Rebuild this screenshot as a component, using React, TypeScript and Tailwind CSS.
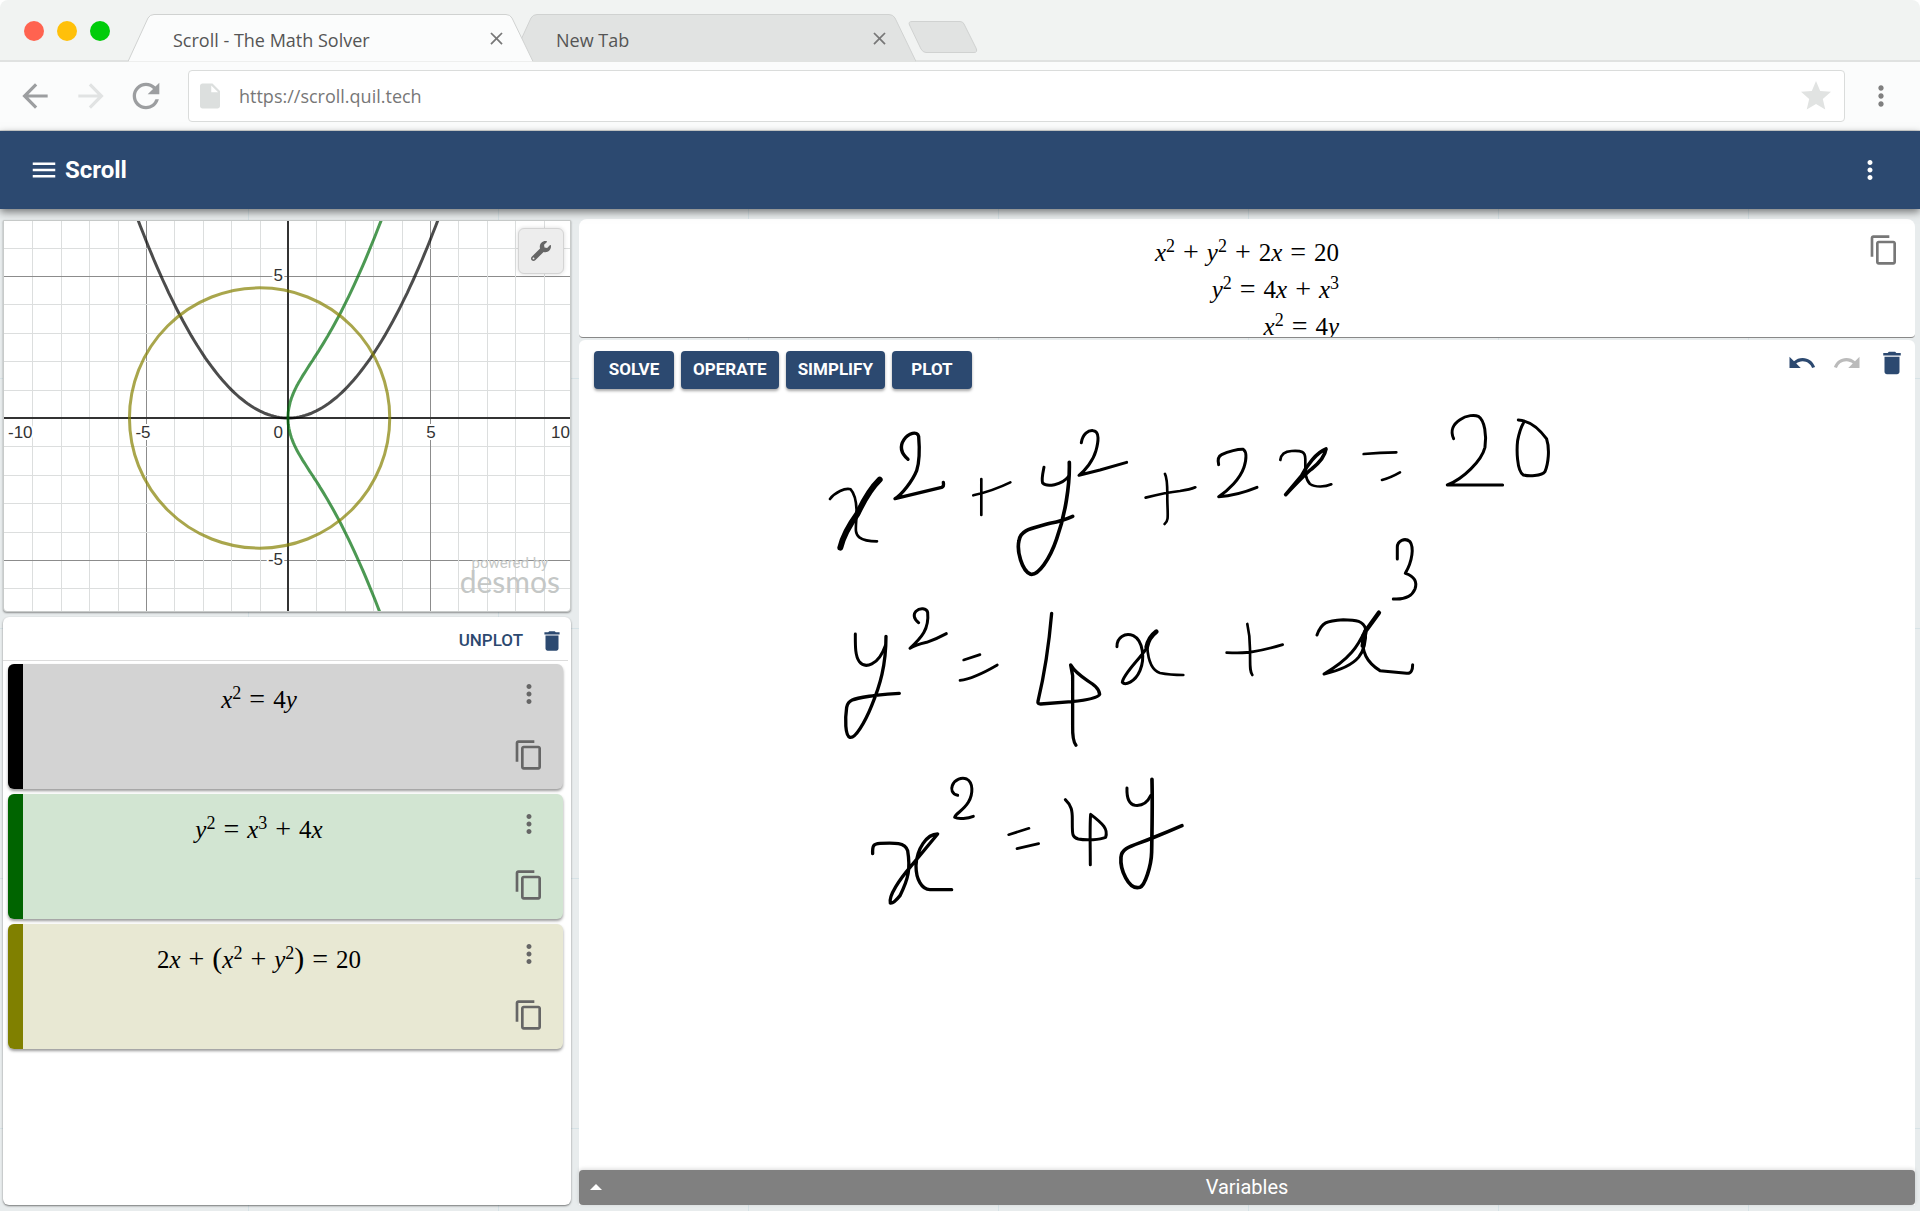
import {useState} from "react";
import type {ReactNode} from "react";
import {
  MdArrowBack,
  MdArrowForward,
  MdClose,
  MdContentCopy,
  MdDelete,
  MdInsertDriveFile,
  MdMenu,
  MdMoreVert,
  MdRedo,
  MdRefresh,
  MdStar,
  MdUndo,
} from "react-icons/md";
import {FaWrench} from "react-icons/fa";

const equations = ["x^2 + y^2 + 2x = 20", "y^2 = 4x + x^3", "x^2 = 4y"];

const plots = [
  {tex: "x^2 = 4y", bar: "bg-black", card: "bg-[#d3d3d3]"},
  {tex: "y^2 = x^3 + 4x", bar: "bg-[#006400]", card: "bg-[#d2e5d2]"},
  {tex: "2x + (x^2 + y^2) = 20", bar: "bg-[#808000]", card: "bg-[#e8e8d3]"},
];

// pen strokes, one group for each part of the canvas that was written on
const ink = [
  {
    x: 221,
    y: 10,
    strokes: [
      {w: 8, d: "M90 300C105 280 135 266 152 271C165 285 170 310 170 345C167 390 164 405 178 415C190 424 215 427 231 427"},
      {w: 18, d: "M239 242Q205 275 172 345Q132 400 121 446"},
      {w: 10, d: "M324 181C300 160 300 140 312 122C325 102 352 95 356 112C360 160 358 190 350 215C338 245 305 288 285 299L425 265Q433 262 430 250"},
      {w: 8, d: "M520 289Q580 275 631 250M544 240V348"},
      {w: 9, d: "M732 205C728 225 724 240 728 252C740 265 785 259 806 232"},
      {w: 11, d: "M808 190C810 260 795 350 770 420C750 480 715 530 692 526C665 515 650 455 657 425C662 390 700 388 750 373Q790 365 818 352"},
      {w: 9, d: "M844 131C848 105 865 93 880 95C900 97 895 130 888 155C880 185 855 215 837 229L900 213L980 190"},
      {w: 8, d: "M1037 296Q1100 280 1140 276Q1170 272 1186 265M1095 225Q1103 240 1102 300C1103 350 1107 365 1094 375"},
      {w: 9, d: "M166 705C166 740 165 770 178 788C195 810 235 800 256 740"},
      {w: 10, d: "M258 712C258 800 240 860 215 920C195 970 165 1020 150 1015C135 1010 135 960 140 925C145 900 160 900 225 889Q265 884 298 883"},
      {w: 9, d: "M356 671C340 660 340 645 348 637C360 625 380 628 383 640C388 690 365 715 330 748Q345 738 380 730Q410 720 439 704"},
      {w: 8, d: "M491 783L540 767M480 844Q520 840 592 798"},
      {w: 10, d: "M755 643C745 760 730 840 714 907Q712 915 722 915L815 908C870 902 895 895 899 886C895 850 840 845 812 798L818 830V980Q817 1025 828 1039"},
      {w: 9, d: "M951 743C950 715 975 700 1000 710C1030 725 1035 780 1020 815C1005 850 975 860 967 850C970 825 1015 785 1042 745"},
      {w: 14, d: "M1069 698Q1046 715 1040 745"},
      {w: 8, d: "M1042 745C1045 790 1060 815 1080 822Q1110 828 1150 828"},
    ],
  },
  {
    x: 541,
    y: 0,
    strokes: [
      {w: 9, d: "M296 227C292 210 295 202 305 197C325 187 355 180 370 181C382 190 378 215 372 235C360 270 325 305 296 323Q350 320 411 295"},
      {w: 8, d: "M481 213C483 195 495 187 515 186C545 184 556 188 556 210C556 250 555 270 570 285C585 295 615 295 634 286"},
      {w: 11, d: "M618 180C590 190 560 230 545 260L497 317Q560 250 575 240C600 220 615 200 618 180"},
      {w: 8, d: "M731 195Q780 190 829 190M786 273Q810 267 840 250"},
      {w: 9, d: "M1001 149C990 125 1000 105 1020 92C1040 78 1065 77 1075 82C1095 95 1100 140 1095 175C1085 215 1030 270 982 288H1148"},
      {w: 9, d: "M1195 93C1230 95 1255 115 1280 150C1290 180 1285 225 1275 248C1265 262 1225 262 1210 258C1190 245 1190 180 1193 155Q1200 120 1210 103"},
      {w: 9, d: "M832 510V475C832 455 855 445 870 458C882 475 878 515 856 553C885 562 892 580 885 600C875 625 850 632 820 630"},
      {w: 8, d: "M320 791Q380 793 400 788Q440 782 488 767M382 705Q390 740 390 780C391 830 388 845 397 858"},
      {w: 9, d: "M591 738C605 700 620 695 670 692C710 692 730 697 737 720C740 790 720 830 612 855C690 810 715 770 735 725"},
      {w: 13, d: "M777 671L737 726L728 770"},
      {w: 9, d: "M728 740C725 790 740 820 780 845L860 853C875 855 878 840 878 827"},
    ],
  },
  {
    x: 241,
    y: 330,
    strokes: [
      {w: 10, d: "M158 404C157 380 160 374 180 373C225 371 255 370 263 395C272 450 265 480 240 530Q220 555 211 552C205 530 240 480 270 445L353 345C320 345 290 390 288 440C288 480 305 512 330 512H395"},
      {w: 9, d: "M413 229C395 225 393 210 397 200C405 180 425 175 440 180C460 190 460 225 445 250C430 275 405 285 404 295C415 302 445 298 460 292"},
      {w: 8, d: "M566 347L627 328M591 389L656 374"},
      {w: 9, d: "M736 242C755 260 757 275 757 300C757 345 755 355 775 360C800 365 840 362 857 355C865 330 850 315 812 286C809 320 811 380 811 437"},
      {w: 9, d: "M921 207C920 235 925 255 945 259C970 262 985 245 992 230"},
      {w: 11, d: "M996 181C998 260 996 340 995 400C994 440 975 500 960 505C925 515 900 450 903 415C905 385 935 382 995 358Q1040 340 1086 320"},
    ],
  },
];

const Formula = ({tex}: {tex: string}) => {
  const tokens = tex.match(/\^\d|\d+|[a-z]|[+=()]/g) ?? [];
  return (
    <span className="whitespace-nowrap font-['Liberation_Serif',serif] text-[25px] leading-[37px] text-black">
      {tokens.map((t, i) => {
        if (t[0] === "^")
          return (
            <sup key={i} className="top-[-9px] text-[18px] leading-none">
              {t[1]}
            </sup>
          );
        if (/[a-z]/.test(t)) return <i key={i}>{t}</i>;
        if (/[+=]/.test(t))
          return (
            <span key={i} className="mx-2 text-[28px] leading-none">
              {t}
            </span>
          );
        if (/[()]/.test(t))
          return (
            <span key={i} className="text-[30px] leading-none">
              {t}
            </span>
          );
        return <span key={i}>{t}</span>;
      })}
    </span>
  );
};

const Tab = ({title, active}: {title: string; active?: boolean}) => (
  <div
    className={`relative flex h-12 w-[405px] items-center pl-[45px] pr-[25px] ${
      active ? "z-10" : "-ml-[22px]"
    }`}
  >
    <svg
      className="absolute inset-0 h-full w-full"
      viewBox="0 0 405 48"
      preserveAspectRatio="none"
      fill={active ? "#fbfcfc" : "#e1e3e2"}
      stroke="#d0d2d1"
    >
      <path d="M0 47.5L20 4Q22 .5 26 .5H378Q382 .5 384 4L405 47.5" />
    </svg>
    <button
      type="button"
      className="relative flex-1 pt-1 text-left text-lg text-[#555]"
    >
      {title}
    </button>
    <button
      type="button"
      aria-label={`Close ${title}`}
      className="relative flex size-6 items-center justify-center text-[#777]"
    >
      <MdClose size={21} />
    </button>
  </div>
);

const BrowserBar = () => {
  const [url, setUrl] = useState("https://scroll.quil.tech");

  return (
    <div className="rounded-t-lg bg-[#f1f3f2] font-['Open_Sans',sans-serif]">
      <div className="flex h-[62px] items-start border-b-2 border-[#e0e2e1] pt-[14px]">
        <div className="flex w-32 gap-[13px] pl-6 pt-[7px]">
          <span className="size-5 rounded-full bg-[#ff6350]" />
          <span className="size-5 rounded-full bg-[#ffc00a]" />
          <span className="size-5 rounded-full bg-[#00cc0a]" />
        </div>
        <Tab title="Scroll - The Math Solver" active />
        <Tab title="New Tab" />
        <button
          type="button"
          aria-label="Open a new tab"
          className="-ml-2 pt-[7px]"
        >
          <svg width="70" height="32" fill="#e1e3e2" stroke="#d0d2d1">
            <path d="M4 .5H52Q55 .5 56 3L68 27Q70 31.500 66 31.500H18Q15 31.500 13 28L1.500 4Q0 .5 4 .5Z" />
          </svg>
        </button>
      </div>
      <div className="flex h-[69px] items-center border-b border-[#d5d7d6] bg-[#fbfcfc] pb-1 pl-4 pr-[23px] pt-1">
        <button type="button" aria-label="Back" className="text-[#9c9ea0]">
          <MdArrowBack size={38} />
        </button>
        <button
          type="button"
          aria-label="Forward"
          className="ml-[18px] text-[#e1e3e3]"
        >
          <MdArrowForward size={38} />
        </button>
        <button
          type="button"
          aria-label="Reload"
          className="ml-4 text-[#9c9ea0]"
        >
          <MdRefresh size={40} />
        </button>
        <div className="ml-[22px] mr-5 flex h-[52px] flex-1 items-center rounded border border-[#dadcdb] bg-white pl-[6px] pr-[10px]">
          <MdInsertDriveFile size={30} className="text-[#dcdfde]" />
          <input
            type="text"
            aria-label="Address"
            value={url}
            onChange={(e) => setUrl(e.target.value)}
            className="ml-[14px] flex-1 bg-transparent text-lg text-[#777] outline-none"
          />
          <button
            type="button"
            aria-label="Bookmark this page"
            className="text-[#e1e3e2]"
          >
            <MdStar size={36} />
          </button>
        </div>
        <button
          type="button"
          aria-label="Browser menu"
          className="flex w-8 justify-center text-[#808080]"
        >
          <MdMoreVert size={38} />
        </button>
      </div>
    </div>
  );
};

const UNIT = 28.4;
const px = (x: number) => 284 + x * UNIT;
const py = (y: number) => 197 - y * UNIT;

const toPath = (points: number[][]) =>
  "M" + points.map(([x, y]) => `${px(x).toFixed(1)} ${py(y).toFixed(1)}`).join("L");

const parabola = Array.from({length: 113}, (_, i) => {
  const x = -5.6 + i * 0.1;
  return [x, (x * x) / 4];
});

// y^2 = x^3 + 4x, walked from the lower branch up to the upper one
const cubic = Array.from({length: 121}, (_, i) => {
  const t = (i - 60) / 60;
  const x = 3.5 * t * t;
  return [x, Math.sign(t) * Math.sqrt(x * x * x + 4 * x)];
});

const axisLabels = [
  {text: "-10", x: 4, y: 217, anchor: "start"},
  {text: "-5", x: 139, y: 217, anchor: "middle"},
  {text: "0", x: 279, y: 217, anchor: "end"},
  {text: "5", x: 427, y: 217, anchor: "middle"},
  {text: "10", x: 566, y: 217, anchor: "end"},
  {text: "5", x: 279, y: 60, anchor: "end"},
  {text: "-5", x: 279, y: 344, anchor: "end"},
] as const;

const Graph = () => (
  <div className="relative mt-px overflow-hidden rounded-b border border-[#c8cbca] bg-white shadow-[0_1px_2px_rgba(0,0,0,0.4)]">
    <svg viewBox="0 0 566 390" className="block w-full" fill="none">
      {Array.from({length: 19}, (_, i) => i - 9).map((n) => (
        <g
          key={n}
          stroke={n % 5 ? "#dcdede" : "#8c8c8c"}
          shapeRendering="crispEdges"
        >
          <path d={`M${Math.round(px(n))} 0V390`} />
          <path d={`M0 ${Math.round(py(n))}H566`} />
        </g>
      ))}
      <path d="M284 0V390M0 197H566" stroke="#333" strokeWidth="2" />
      <g strokeWidth="3" strokeOpacity="0.7">
        <path d={toPath(parabola)} stroke="#000" />
        <path d={toPath(cubic)} stroke="#006e0a" />
        <circle
          cx={px(-1)}
          cy={py(0)}
          r={Math.sqrt(21) * UNIT}
          stroke="#858000"
        />
      </g>
      <g
        className="font-['Liberation_Sans',Arial,sans-serif] text-[17px]"
        fill="#333"
        stroke="#fff"
        strokeWidth="4"
        paintOrder="stroke"
      >
        {axisLabels.map((l, i) => (
          <text key={i} x={l.x} y={l.y} textAnchor={l.anchor}>
            {l.text}
          </text>
        ))}
      </g>
    </svg>
    <button
      type="button"
      aria-label="Graph settings"
      className="absolute right-[6px] top-[7px] flex size-[46px] items-center justify-center rounded-md border border-[#d4d4d4] bg-[#ededed] text-[#666] shadow-[0_0_4px_rgba(0,0,0,0.15)]"
    >
      <FaWrench size={20} />
    </button>
    <a
      href="https://www.desmos.com"
      className="absolute bottom-[19px] right-[10px] flex flex-col items-center text-[#c4c7c6]"
    >
      <span className="font-['Roboto',sans-serif] text-[15px] leading-[14px]">
        powered by
      </span>
      <span className="font-['Lato',sans-serif] text-[30px] leading-[22px]">
        desmos
      </span>
    </a>
  </div>
);

const PlotList = () => (
  <section className="flex flex-1 flex-col rounded-md bg-white shadow-[0_1px_2px_rgba(0,0,0,0.5)]">
    <div className="mr-[3px] flex h-11 items-center justify-end border-b border-[#dcdcdc] pr-[3px] pt-1">
      <button
        type="button"
        className="px-4 text-[17px] font-medium text-[#2c4970]"
      >
        UNPLOT
      </button>
      <button
        type="button"
        aria-label="Delete all plots"
        className="text-[#2c4970]"
      >
        <MdDelete size={26} />
      </button>
    </div>
    <ul className="flex flex-col gap-[5px] pl-[5px] pr-2 pt-[3px]">
      {plots.map((plot) => (
        <li
          key={plot.tex}
          className={`flex h-[125px] overflow-hidden rounded-md shadow-[0_2px_3px_rgba(0,0,0,0.4)] ${plot.card}`}
        >
          <div className={`w-[15px] ${plot.bar}`} />
          <div className="flex-1 pt-[17px] text-center">
            <Formula tex={plot.tex} />
          </div>
          <div className="flex w-[68px] flex-col items-center pt-[15px] text-[#666]">
            <button type="button" aria-label={`Options for ${plot.tex}`}>
              <MdMoreVert size={30} />
            </button>
            <button
              type="button"
              aria-label={`Copy ${plot.tex}`}
              className="mt-[30px]"
            >
              <MdContentCopy size={32} />
            </button>
          </div>
        </li>
      ))}
    </ul>
  </section>
);

const ToolButton = ({children}: {children: ReactNode}) => (
  <button
    type="button"
    className="h-[38px] min-w-20 rounded bg-[#2c4970] px-3 text-[17px] font-bold text-white shadow-[0_2px_3px_rgba(0,0,0,0.35)]"
  >
    {children}
  </button>
);

const Canvas = () => (
  <section className="flex flex-1 flex-col rounded-t-md bg-white">
    <div className="flex items-start justify-between pl-[15px] pr-2">
      <div className="flex gap-[7px] pt-[11px]">
        <ToolButton>SOLVE</ToolButton>
        <ToolButton>OPERATE</ToolButton>
        <ToolButton>SIMPLIFY</ToolButton>
        <ToolButton>PLOT</ToolButton>
      </div>
      <div className="flex gap-[15px] pt-2 text-[#2c4970]">
        <button type="button" aria-label="Undo">
          <MdUndo size={30} />
        </button>
        <button type="button" aria-label="Redo" className="text-[#bbb]">
          <MdRedo size={30} />
        </button>
        <button type="button" aria-label="Clear canvas">
          <MdDelete size={30} />
        </button>
      </div>
    </div>
    <svg
      className="min-h-[560px] w-full flex-1"
      fill="none"
      stroke="#000"
      strokeLinecap="round"
      strokeLinejoin="round"
    >
      {ink.map((group, i) => (
        <g key={i} transform={`translate(${group.x} ${group.y}) scale(0.3333)`}>
          {group.strokes.map((s, j) => (
            <path key={j} d={s.d} strokeWidth={s.w} />
          ))}
        </g>
      ))}
    </svg>
    <button
      type="button"
      className="flex h-[35px] items-center rounded bg-[#808080] px-[11px] pb-[2px] text-xl text-white shadow-[0_-1px_4px_rgba(0,0,0,0.15)]"
    >
      <svg width="12" height="6" fill="#fff">
        <path d="M6 0L12 6H0Z" />
      </svg>
      <span className="flex-1 pr-3 text-center">Variables</span>
    </button>
  </section>
);

const App = () => {
  return (
    <div className="flex min-h-screen flex-col bg-white font-['Roboto',sans-serif]">
      <BrowserBar />
      <header className="relative z-10 flex h-[78px] items-center justify-between bg-[#2c4970] pl-[29px] pr-[35px] text-white shadow-[0_3px_8px_rgba(0,0,0,0.5)]">
        <div className="flex items-center gap-[6px]">
          <button type="button" aria-label="Menu">
            <MdMenu size={30} />
          </button>
          <h1 className="text-2xl font-bold">Scroll</h1>
        </div>
        <button type="button" aria-label="More options">
          <MdMoreVert size={30} />
        </button>
      </header>
      <main className="grid flex-1 grid-cols-[71fr_167fr] gap-2 bg-[#e8eced] bg-[linear-gradient(to_right,#d6e2e6_1px,transparent_1px),linear-gradient(to_bottom,#d6e2e6_1px,transparent_1px)] bg-[size:250px_250px] bg-[position:248px_169px] pb-[6px] pl-[3px] pr-[5px] pt-[10px]">
        <div className="flex min-w-0 flex-col gap-[5px]">
          <Graph />
          <PlotList />
        </div>
        <div className="flex min-w-0 flex-col gap-[2px]">
          <section className="relative h-[119px] overflow-hidden rounded-t-lg rounded-b border-b border-[#888] bg-white">
            <div className="flex justify-center pt-[15px]">
              <div className="flex flex-col items-end">
                {equations.map((tex) => (
                  <Formula key={tex} tex={tex} />
                ))}
              </div>
            </div>
            <button
              type="button"
              aria-label="Copy equations"
              className="absolute right-[15px] top-[15px] text-[#777]"
            >
              <MdContentCopy size={32} />
            </button>
          </section>
          <Canvas />
        </div>
      </main>
    </div>
  );
};

export default App;
